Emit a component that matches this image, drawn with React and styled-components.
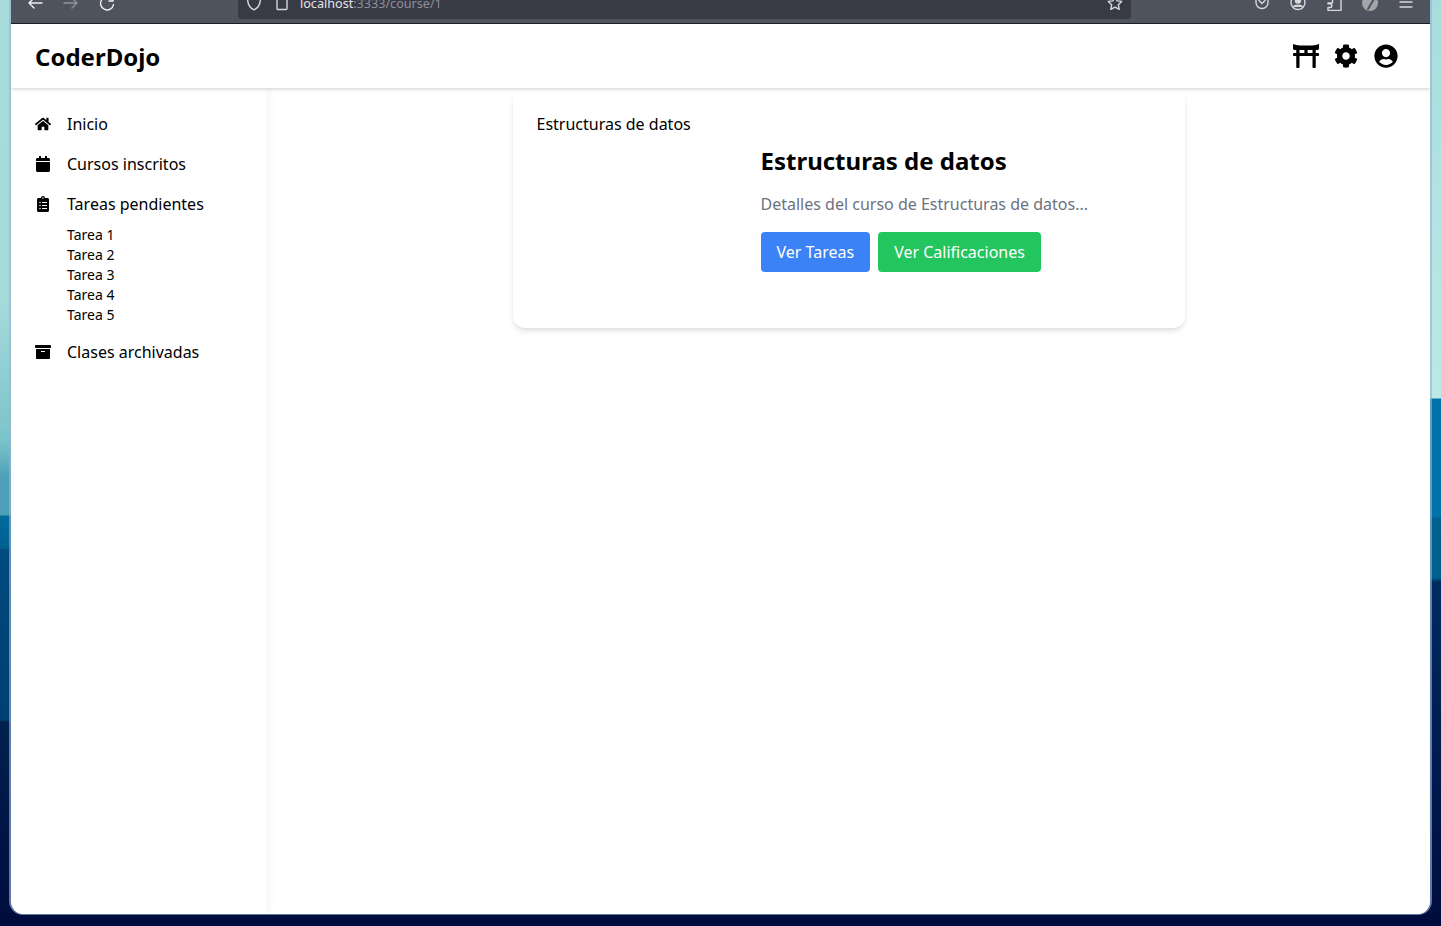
import React from 'react';
import styled, { createGlobalStyle } from 'styled-components';
import { FaHome, FaCalendar, FaClipboardList, FaArchive, FaToriiGate, FaCog, FaUserCircle } from 'react-icons/fa';

const Global = createGlobalStyle`
  html, body { margin: 0; padding: 0; height: 100%; }
  body { font-family: "Noto Sans", "Open Sans", sans-serif; color: #000; overflow: hidden; }
  * { box-sizing: border-box; }
`;

const Desktop = styled.div`
  width: 1441px;
  height: 926px;
  padding: 0 9px 11px 9px;
  display: flex;
  background-color: #000c3e;
  background-repeat: no-repeat;
  background-position: left top, right top;
  background-size: 11px 100%, 11px 100%;
  background-image:
    linear-gradient(180deg, #a9dcdc 0, #a6dadb 300px, #7cc4ca 440px, #4d9eb6 478px, #4d9eb6 515px, #006b9c 516px, #00608f 548px, #004a7e 550px, #003f72 720px, #00224f 722px, #001446 830px, #000c3e 926px),
    linear-gradient(180deg, #a9dcdc 0, #bce9e8 398px, #0072a8 399px, #0072a8 517px, #00608f 518px, #005f8e 578px, #002a5f 582px, #001a50 760px, #000c3e 926px);
`;

const BrowserWindow = styled.div`
  flex: 1;
  display: flex;
  flex-direction: column;
  overflow: hidden;
  border: solid rgba(148, 182, 213, .64);
  border-width: 0 2px 1px 2px;
  border-radius: 0 0 14px 14px;
  background: #fff;
  background-clip: padding-box;
`;

const Toolbar = styled.div`
  height: 24px;
  flex: none;
  display: flex;
  align-items: flex-end;
  overflow: hidden;
  background: #4f535e;
  border-bottom: 1px solid #1d2026;
  color: #f0f0f4;
`;

const NavIcons = styled.div`
  width: 227px;
  flex: none;
  display: flex;
  align-items: flex-end;
  gap: 20px;
  padding: 0 0 12px 16px;
`;

const ToolIcon = styled.svg`
  width: 16px;
  height: 16px;
  flex: none;
  fill: none;
  stroke: currentColor;
  stroke-width: 1.4;
  stroke-linecap: round;
  stroke-linejoin: round;
  opacity: ${p => (p.$dim ? 0.4 : 1)};
`;

const UrlBar = styled.div`
  width: 893px;
  height: 19px;
  margin-bottom: 4px;
  flex: none;
  display: flex;
  align-items: flex-end;
  padding: 0 8px 8px 8px;
  gap: 12px;
  background: #383a46;
  border-radius: 0 0 4px 4px;
  color: #d8d8dc;
`;

const UrlText = styled.div`
  flex: 1;
  font-size: 12.6px;
  line-height: 18px;
  margin: 0 0 -2px -2px;
  color: #8e9098;
  white-space: nowrap;
  & > b { font-weight: 400; color: #e4e4e8; }
`;

const RightTools = styled.div`
  flex: 1;
  display: flex;
  align-items: flex-end;
  justify-content: flex-end;
  gap: 20px;
  padding: 0 16px 12px 0;
  color: #d8d8dc;
`;

const Header = styled.header`
  position: relative;
  z-index: 2;
  height: 64px;
  flex: none;
  display: flex;
  align-items: center;
  justify-content: space-between;
  padding: 0 32px 0 24px;
  background: #fff;
  box-shadow: 0 2px 4px rgba(0,0,0,.1), 0 1px 2px rgba(0,0,0,.06);
`;

const Logo = styled.div`
  font-size: 24px;
  line-height: 32px;
  font-weight: 700;
  margin-top: 2px;
`;

const HeaderIcons = styled.div`
  display: flex;
  align-items: center;
  gap: 16px;
  font-size: 24px;
  & > svg { display: block; }
`;

const Torii = styled(FaToriiGate)`
  width: 26px;
  height: 24px;
  margin-right: -1px;
`;

const Body = styled.div`
  flex: 1;
  display: flex;
  min-height: 0;
`;

const Sidebar = styled.aside`
  position: relative;
  z-index: 1;
  width: 256px;
  flex: none;
  padding: 16px 0 0 24px;
  background: #fff;
  box-shadow: 2px 0 8px rgba(0,0,0,.05);
`;

const NavItem = styled.div`
  height: 40px;
  display: flex;
  align-items: center;
  font-size: 16px;
  line-height: 24px;
  & > svg { width: 16px; height: 16px; margin-right: 16px; flex: none; }
`;

const SubList = styled.div`
  padding: 1px 0 7px 32px;
`;

const SubItem = styled.div`
  font-size: 14px;
  line-height: 20px;
`;

const Main = styled.main`
  flex: 1;
  display: flex;
  justify-content: center;
  align-items: flex-start;
  background: #fff;
`;

const Card = styled.section`
  width: 672px;
  height: 240px;
  padding: 24px;
  display: flex;
  gap: 16px;
  background: #fff;
  border-radius: 12px;
  box-shadow: 0 4px 6px -1px rgba(0,0,0,.1), 0 2px 4px -1px rgba(0,0,0,.06);
`;

const ImageAlt = styled.div`
  width: 208px;
  flex: none;
  font-size: 16px;
  line-height: 24px;
`;

const CardBody = styled.div`
  flex: 1;
`;

const Title = styled.h1`
  margin: 33px 0 15px;
  font-size: 24px;
  line-height: 32px;
  font-weight: 700;
`;

const Detail = styled.p`
  margin: 0 0 16px;
  font-size: 16px;
  line-height: 24px;
  color: #6b7280;
`;

const Actions = styled.div`
  display: flex;
  gap: 8px;
`;

const Button = styled.button`
  height: 40px;
  padding: 0 16px;
  border: 0;
  border-radius: 4px;
  font: 400 16px/24px "Noto Sans", sans-serif;
  color: #fff;
  background: ${p => p.$bg};
`;

export default function App() {
  return (
    <Desktop>
      <Global />
      <BrowserWindow>
        <Toolbar>
          <NavIcons>
            <ToolIcon viewBox="0 0 16 16"><path d="M15 8H2M7 3L2 8l5 5" /></ToolIcon>
            <ToolIcon viewBox="0 0 16 16" $dim><path d="M1 8h13M9 3l5 5-5 5" /></ToolIcon>
            <ToolIcon viewBox="0 0 16 16"><path d="M14 2v4h-4M14.500 9.500a6.500 6.500 0 1 1-1.500-5.300L14 6" /></ToolIcon>
          </NavIcons>
          <UrlBar>
            <ToolIcon viewBox="0 0 16 16"><path d="M8 1.500c2 1 4 1.400 6.500 1.400 0 6-1.500 9.800-6.500 11.900C3 12.700 1.500 8.900 1.500 2.900c2.500 0 4.500-.4 6.500-1.400z" /></ToolIcon>
            <ToolIcon viewBox="0 0 16 16"><path d="M3.500 1h5.500l4 4v8.500a1 1 0 0 1-1 1H4a1 1 0 0 1-1-1V1.500z" /></ToolIcon>
            <UrlText><b>localhost</b>:3333/course/1</UrlText>
            <ToolIcon viewBox="0 0 16 16"><path d="M8 1.500l2 4.300 4.700.6-3.400 3.300.9 4.700L8 12.100l-4.200 2.300.9-4.700L1.300 6.400 6 5.800z" /></ToolIcon>
          </UrlBar>
          <RightTools>
            <ToolIcon viewBox="0 0 16 16"><path d="M2 0h12v7.500a6 6 0 0 1-12 0zM5 5.500l3 3 3-3" /></ToolIcon>
            <ToolIcon viewBox="0 0 16 16"><circle cx="8" cy="7.500" r="7" /><circle cx="8" cy="5.500" r="2.500" fill="currentColor" /><path d="M3.500 12c1-2.500 8-2.500 9 0" fill="currentColor" /></ToolIcon>
            <ToolIcon viewBox="0 0 16 16"><path d="M15 0V15.500H2V12.500H4a1.800 1.800 0 0 0 0-3.600H2V8H6.500V0" /></ToolIcon>
            <ToolIcon viewBox="0 0 16 16"><circle cx="8" cy="8" r="8" fill="#a5a5a8" stroke="none" /><path d="M6 14L12.500 3" stroke="#4f535e" strokeWidth="2" /></ToolIcon>
            <ToolIcon viewBox="0 0 16 16"><path d="M2 2h12M2 7h12M2 12h12" /></ToolIcon>
          </RightTools>
        </Toolbar>
        <Header>
          <Logo>CoderDojo</Logo>
          <HeaderIcons>
            <Torii preserveAspectRatio="none" />
            <FaCog />
            <FaUserCircle />
          </HeaderIcons>
        </Header>
        <Body>
          <Sidebar>
            <NavItem><FaHome />Inicio</NavItem>
            <NavItem><FaCalendar />Cursos inscritos</NavItem>
            <NavItem><FaClipboardList />Tareas pendientes</NavItem>
            <SubList>
              {[1, 2, 3, 4, 5].map(n => <SubItem key={n}>Tarea {n}</SubItem>)}
            </SubList>
            <NavItem><FaArchive />Clases archivadas</NavItem>
          </Sidebar>
          <Main>
            <Card>
              <ImageAlt>Estructuras de datos</ImageAlt>
              <CardBody>
                <Title>Estructuras de datos</Title>
                <Detail>Detalles del curso de Estructuras de datos...</Detail>
                <Actions>
                  <Button $bg="#3b82f6">Ver Tareas</Button>
                  <Button $bg="#22c55e">Ver Calificaciones</Button>
                </Actions>
              </CardBody>
            </Card>
          </Main>
        </Body>
      </BrowserWindow>
    </Desktop>
  );
}
